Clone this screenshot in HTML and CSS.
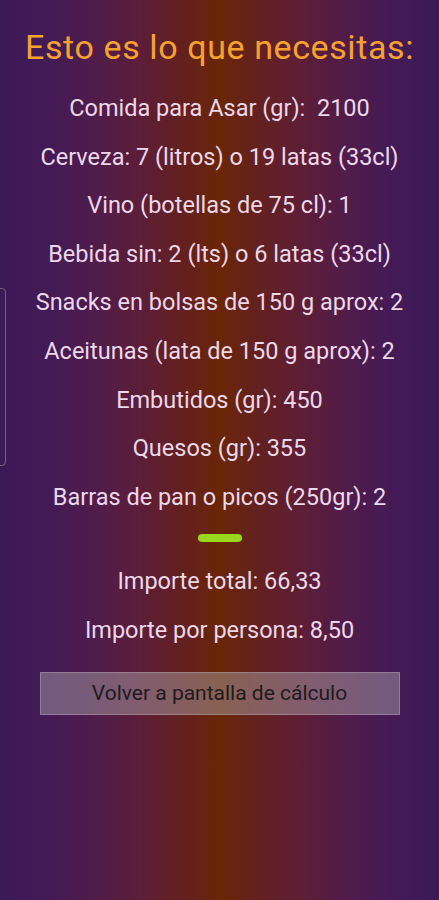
FILE: index.html
```html
<!DOCTYPE html>
<html lang="es">
<head>
    <meta charset="UTF-8">
    <meta name="viewport" content="width=device-width, initial-scale=1.0">
    <title>Resultado</title>
    <link rel="stylesheet" href="styles.css">
</head>
<body>
    <div class="edge-handle"></div>
    <div class="container">
        <h2>Esto es lo que necesitas:</h2>
        <div class="list">
            <p>Comida para Asar (gr):&nbsp; 2100</p>
            <p>Cerveza: 7 (litros) o 19 latas (33cl)</p>
            <p>Vino (botellas de 75 cl): 1</p>
            <p>Bebida sin: 2 (lts) o 6 latas (33cl)</p>
            <p>Snacks en bolsas de 150 g aprox: 2</p>
            <p>Aceitunas (lata de 150 g aprox): 2</p>
            <p>Embutidos (gr): 450</p>
            <p>Quesos (gr): 355</p>
            <p>Barras de pan o picos (250gr): 2</p>
        </div>
        <div class="divider"></div>
        <div class="list">
            <p>Importe total: 66,33</p>
            <p>Importe por persona: 8,50</p>
        </div>
        <button>Volver a pantalla de cálculo</button>
    </div>
</body>
</html>
```

FILE: styles.css
```css
body {
    font-family: Roboto, 'Noto Sans', sans-serif;
    background: linear-gradient(to right, #3b1a58 0%, #441a55 12%, #501c4a 22%, #5c1e38 32%, #64201e 42%, #6a2606 50%, #64211e 58%, #5e1e34 68%, #521c48 78%, #451a55 88%, #3b1a58 100%);
    color: #ecd8ea;
    margin: 0;
    padding: 0;
    height: 900px;
    overflow: hidden;
}
.container {
    display: flex;
    flex-direction: column;
    align-items: center;
    padding-top: 27px;
}
h2 {
    font-size: 34px;
    font-weight: 400;
    letter-spacing: 0.6px;
    line-height: 40px;
    margin: 0 0 17px;
    color: #f5a22e;
    white-space: nowrap;
}
.list {
    display: flex;
    flex-direction: column;
    align-items: center;
}
.list p {
    margin: 0;
    font-size: 23.5px;
    line-height: 48.6px;
    white-space: nowrap;
}
.divider {
    width: 44px;
    height: 8px;
    border-radius: 4px;
    background: #9ad81e;
    margin: 13px 0 15px;
}
button {
    width: 360px;
    height: 43px;
    margin-top: 17px;
    border: 1px solid rgba(200, 190, 200, 0.35);
    background: rgba(175, 170, 175, 0.45);
    color: #1f1a1f;
    font-family: Roboto, 'Noto Sans', sans-serif;
    font-size: 21px;
    cursor: pointer;
}
.edge-handle {
    position: absolute;
    left: -4px;
    top: 288px;
    width: 8px;
    height: 176px;
    border: 1px solid rgba(150, 140, 160, 0.6);
    border-radius: 4px;
}
```
